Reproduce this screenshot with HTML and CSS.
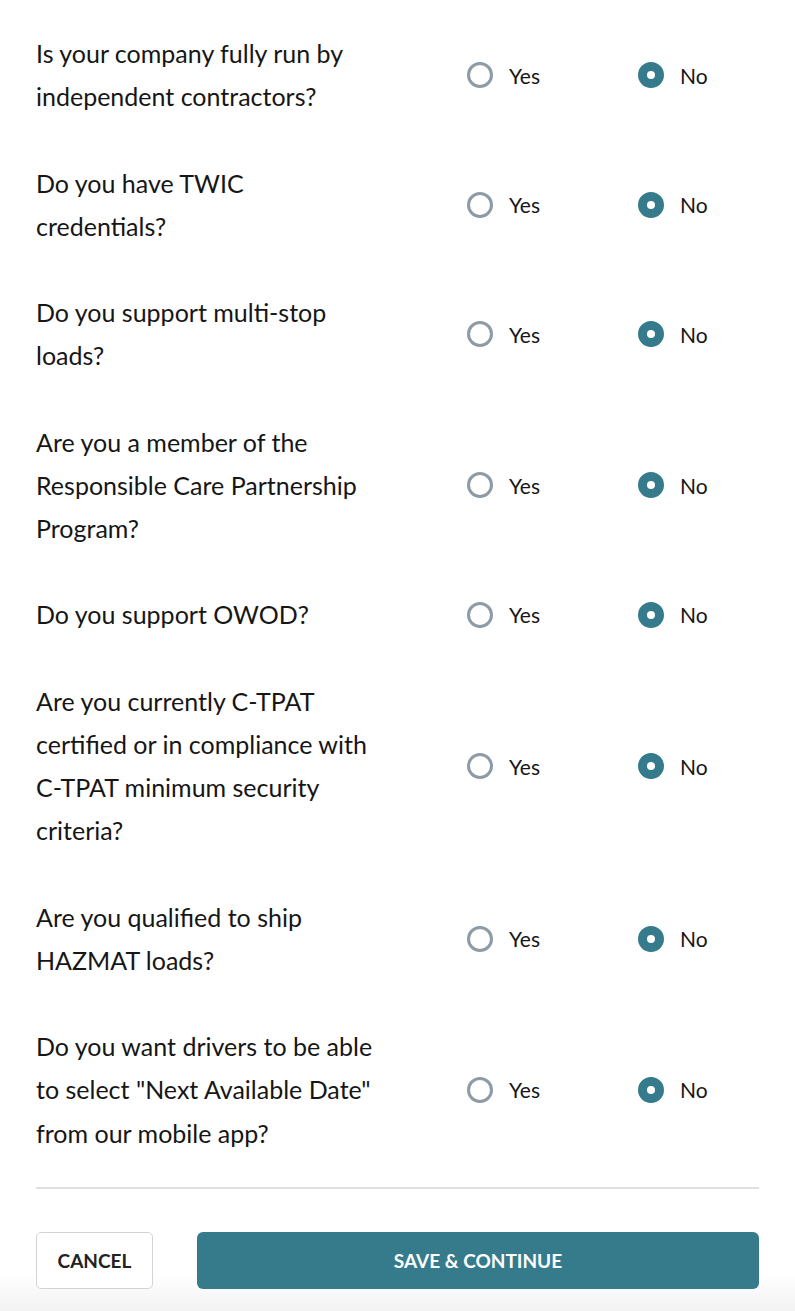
FILE: index.html
```html
<!DOCTYPE html>
<html lang="en">
<head>
<meta charset="utf-8">
<title>Carrier questions</title>
<link rel="stylesheet" href="styles.css">
</head>
<body>
<main class="page">
  <form class="form">
    <div class="row">
      <div class="question">Is your company fully run by independent contractors?</div>
      <label class="option"><span class="radio"></span>Yes</label>
      <label class="option"><span class="radio checked"></span>No</label>
    </div>
    <div class="row">
      <div class="question">Do you have TWIC credentials?</div>
      <label class="option"><span class="radio"></span>Yes</label>
      <label class="option"><span class="radio checked"></span>No</label>
    </div>
    <div class="row">
      <div class="question">Do you support multi-stop loads?</div>
      <label class="option"><span class="radio"></span>Yes</label>
      <label class="option"><span class="radio checked"></span>No</label>
    </div>
    <div class="row">
      <div class="question">Are you a member of the Responsible Care Partnership Program?</div>
      <label class="option"><span class="radio"></span>Yes</label>
      <label class="option"><span class="radio checked"></span>No</label>
    </div>
    <div class="row">
      <div class="question">Do you support OWOD?</div>
      <label class="option"><span class="radio"></span>Yes</label>
      <label class="option"><span class="radio checked"></span>No</label>
    </div>
    <div class="row">
      <div class="question">Are you currently C-TPAT certified or in compliance with C-TPAT minimum security criteria?</div>
      <label class="option"><span class="radio"></span>Yes</label>
      <label class="option"><span class="radio checked"></span>No</label>
    </div>
    <div class="row">
      <div class="question">Are you qualified to ship HAZMAT loads?</div>
      <label class="option"><span class="radio"></span>Yes</label>
      <label class="option"><span class="radio checked"></span>No</label>
    </div>
    <div class="row">
      <div class="question">Do you want drivers to be able to select "Next Available Date" from our mobile app?</div>
      <label class="option"><span class="radio"></span>Yes</label>
      <label class="option"><span class="radio checked"></span>No</label>
    </div>
  </form>
  <footer class="actions">
    <button type="button" class="btn btn-cancel">CANCEL</button>
    <button type="button" class="btn btn-save">SAVE &amp; CONTINUE</button>
  </footer>
</main>
</body>
</html>
```
FILE: styles.css
```css
html, body {
  margin: 0;
  padding: 0;
  background: #ffffff;
}
body {
  font-family: Lato, "Open Sans", sans-serif;
  color: #161616;
}
.page {
  padding: 32px 36px 0 36px;
  min-height: 1311px;
  box-sizing: border-box;
  display: flex;
  flex-direction: column;
}
.form {
  display: flex;
  flex-direction: column;
  gap: 43px;
  padding-bottom: 32px;
  border-bottom: 2px solid #e0e0e0;
}
.row {
  display: grid;
  grid-template-columns: 431px 171px 1fr;
  align-items: center;
}
.question {
  max-width: 340px;
  font-size: 25px;
  line-height: 43.25px;
}
.option {
  display: flex;
  align-items: center;
  gap: 16px;
  font-size: 21px;
}
.radio {
  width: 26px;
  height: 26px;
  box-sizing: border-box;
  border-radius: 50%;
  border: 3px solid #8d9ba6;
  background: #fff;
}
.radio.checked {
  border: 9px solid #357b8b;
  background: #ffffff;
}
.actions {
  display: flex;
  gap: 44px;
  margin: 0 -36px;
  padding: 43px 36px 23px 36px;
  flex: 1;
  background: linear-gradient(#ffffff 68%, #f2f2f2 100%);
}
.btn {
  height: 57px;
  font-family: Lato, sans-serif;
  font-weight: 700;
  font-size: 19px;
  letter-spacing: 0;
  border-radius: 5px;
  cursor: pointer;
}
.btn-cancel {
  width: 117px;
  background: #ffffff;
  color: #222;
  border: 1.5px solid #d3d3d3;
}
.btn-save {
  flex: 1;
  background: #357b8b;
  color: #ffffff;
  border: none;
  border-radius: 6px;
}
```
